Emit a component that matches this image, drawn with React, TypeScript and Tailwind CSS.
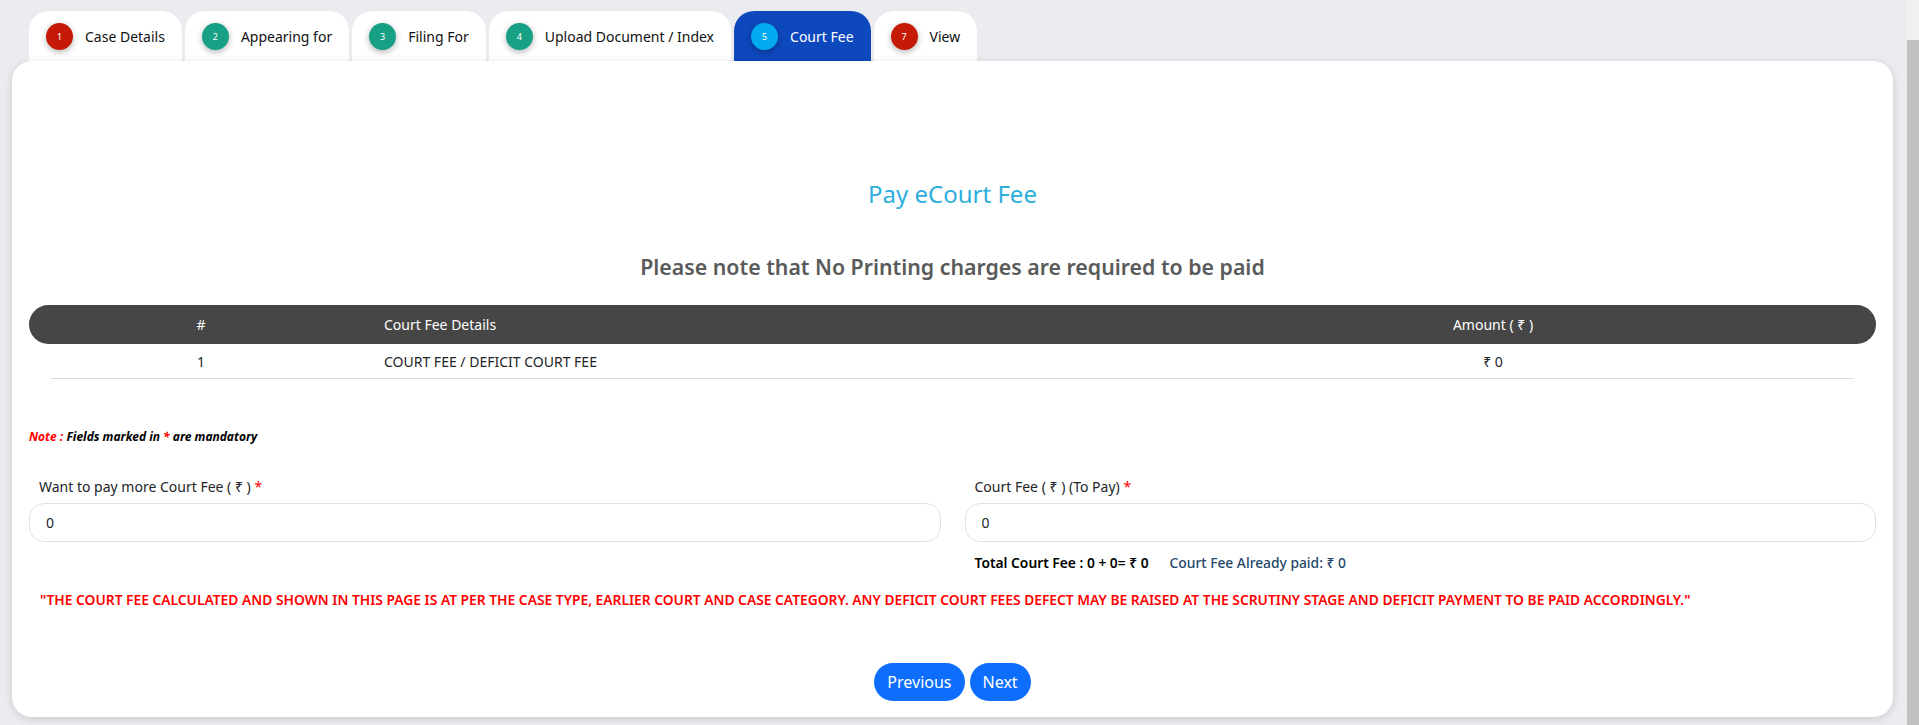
import React from "react";

type Step = { n: number; label: string; tone: "red" | "green" | "blue"; active?: boolean };

const STEPS: Step[] = [
  { n: 1, label: "Case Details", tone: "red" },
  { n: 2, label: "Appearing for", tone: "green" },
  { n: 3, label: "Filing For", tone: "green" },
  { n: 4, label: "Upload Document / Index", tone: "green" },
  { n: 5, label: "Court Fee", tone: "blue", active: true },
  { n: 7, label: "View", tone: "red" },
];

const toneClass = {
  red: "bg-[#c41a06]",
  green: "bg-[#17a084]",
  blue: "bg-[#03aaf0]",
};

export default function App() {
  return (
    <div className="flex h-screen overflow-hidden bg-[#ebecf0] font-['Noto_Sans',sans-serif] text-[14px] text-[#212529]">
      <div className="flex min-w-0 flex-1 flex-col pl-3 pr-[14px]">
        <nav className="flex gap-[3px] pl-[17px] pt-[11px]">
          {STEPS.map((s) => (
            <StepTab key={s.n} step={s} />
          ))}
        </nav>

        <section className="relative z-10 flex h-[656px] flex-col rounded-[20px] bg-white px-[17px] pb-4 pt-[118px] shadow-[0_2px_8px_rgba(0,0,0,0.14)]">
          <h4 className="text-center text-[24px] leading-[29px] text-[#2eaedc]">Pay eCourt Fee</h4>
          <h5 className="mt-[47px] text-center text-[21.3px] font-semibold leading-[24px] text-[#5a5a5a]">
            Please note that No Printing charges are required to be paid
          </h5>

          {/* fee table */}
          <div className="mt-[26px] grid h-[39px] grid-cols-[344px_1009px_222px_1fr] items-center rounded-[20px] bg-[#464646] text-white">
            <div className="text-center">#</div>
            <div className="pl-[11px]">Court Fee Details</div>
            <div className="text-center">Amount ( ₹ )</div>
            <div />
          </div>
          <div className="mx-[22px] grid h-[35px] grid-cols-[300px_1031px_222px_1fr] items-center border-b border-[#dcdcdc]">
            <div className="text-center">1</div>
            <div className="pl-[33px]">COURT FEE / DEFICIT COURT FEE</div>
            <div className="text-center">₹ 0</div>
            <div />
          </div>

          <p className="mt-[50px] text-[12px] font-bold italic leading-4 text-black">
            <span className="text-[#ff0000]">Note : </span>Fields marked in <span className="text-[#ff0000]">*</span> are mandatory
          </p>

          <div className="mt-[32px] grid grid-cols-2 gap-x-6">
            <Field label="Want to pay more Court Fee ( ₹ )" value="0" />
            <div>
              <Field label="Court Fee ( ₹ ) (To Pay)" value="0" />
              <div className="mt-[11px] flex gap-[21px] pl-[10px] text-[13.8px] leading-5">
                <span className="font-semibold text-black">Total Court Fee : 0 + 0= ₹ 0</span>
                <span className="font-medium text-[#23466b]">Court Fee Already paid: ₹ 0</span>
              </div>
            </div>
          </div>

          <p className="mt-[17px] pl-[11px] text-[13.8px] font-semibold leading-5 text-[#ff0000]">
            "THE COURT FEE CALCULATED AND SHOWN IN THIS PAGE IS AT PER THE CASE TYPE, EARLIER COURT AND CASE CATEGORY. ANY DEFICIT COURT FEES DEFECT MAY BE RAISED AT THE SCRUTINY STAGE AND DEFICIT PAYMENT TO BE PAID ACCORDINGLY."
          </p>

          <div className="mt-auto flex justify-center gap-[5px]">
            <button className="h-[38px] rounded-full bg-[#0d6efd] px-[13px] text-[16px] text-white">Previous</button>
            <button className="h-[38px] rounded-full bg-[#0d6efd] px-[13px] text-[16px] text-white">Next</button>
          </div>
        </section>
      </div>

      {/* browser scrollbar */}
      <div className="flex w-3 flex-col bg-[#f1f1f1]">
        <div className="mt-[40px] flex-1 bg-[#c1c1c1]" />
      </div>
    </div>
  );
}

function StepTab({ step }: { step: Step }) {
  return (
    <div
      className={`flex h-[50px] items-start gap-3 rounded-t-[20px] pl-[17px] pr-[17px] pt-[12px] ${
        step.active ? "bg-[#0e48bd] text-white" : "bg-white text-[#111]"
      }`}
    >
      <span
        className={`flex h-[27px] w-[27px] shrink-0 items-center justify-center rounded-full text-[9px] text-white shadow-[0_2px_6px_rgba(0,0,0,0.3)] ${toneClass[step.tone]}`}
      >
        {step.n}
      </span>
      <span className="leading-[27px]">{step.label}</span>
    </div>
  );
}

function Field({ label, value }: { label: string; value: string }) {
  return (
    <div>
      <label className="block pl-[10px] leading-5">
        {label} <span className="text-[#ff0000]">*</span>
      </label>
      <input
        readOnly
        value={value}
        className="mt-[6px] h-[39px] w-full rounded-[15px] border border-[#dee2e6] bg-white px-4 text-[14px] text-[#212529] outline-none"
      />
    </div>
  );
}
